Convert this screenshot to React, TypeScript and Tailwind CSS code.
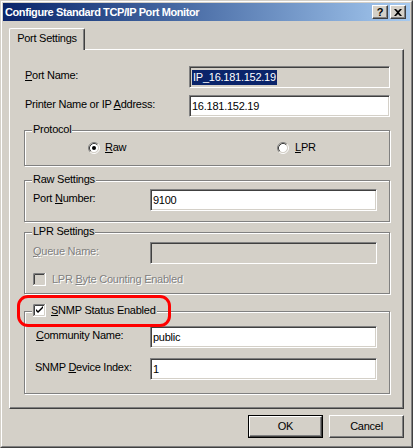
import React from "react";

const face = "bg-[#d4d0c8]";

// underline the access key letter
function U({ children }: { children: React.ReactNode }) {
  return <span className="underline underline-offset-[1px]">{children}</span>;
}

function Field({
  children,
  white = true,
  className = "",
}: {
  children?: React.ReactNode;
  white?: boolean;
  className?: string;
}) {
  return (
    <div
      className={`h-[22px] flex items-center pl-[2px] border border-t-[#808080] border-l-[#808080] border-r-white border-b-white shadow-[inset_1px_1px_0_#404040,inset_-1px_-1px_0_#d4d0c8] ${
        white ? "bg-white" : face
      } ${className}`}
    >
      {children}
    </div>
  );
}

function Group({
  label,
  className = "",
  children,
}: {
  label: React.ReactNode;
  className?: string;
  children?: React.ReactNode;
}) {
  return (
    <div
      className={`relative border border-[#808080] shadow-[inset_1px_1px_0_#fff,1px_1px_0_#fff] ${className}`}
    >
      <div className={`absolute -top-[8px] left-[7px] px-[1px] h-[13px] flex items-center leading-[13px] ${face}`}>
        {label}
      </div>
      {children}
    </div>
  );
}

function Radio({ checked }: { checked?: boolean }) {
  return (
    <svg width="12" height="12" viewBox="0 0 12 12" className="shrink-0">
      <circle cx="6" cy="6" r="4.2" fill="#fff" />
      <path d="M2.11 9.89A5.5 5.5 0 0 1 9.89 2.11" fill="none" stroke="#808080" />
      <path d="M9.89 2.11A5.5 5.5 0 0 1 2.11 9.89" fill="none" stroke="#fff" />
      <path d="M2.82 9.18A4.5 4.5 0 0 1 9.18 2.82" fill="none" stroke="#404040" />
      <path d="M9.18 2.82A4.5 4.5 0 0 1 2.82 9.18" fill="none" stroke="#d4d0c8" />
      {checked && <circle cx="6" cy="6" r="2" fill="#000" />}
    </svg>
  );
}

function Check({ checked, disabled }: { checked?: boolean; disabled?: boolean }) {
  return (
    <svg width="13" height="13" viewBox="0 0 13 13" className="shrink-0">
      <rect x="0" y="0" width="13" height="13" fill="#fff" />
      <rect x="2" y="2" width="9" height="9" fill={disabled ? "#d4d0c8" : "#fff"} />
      <path d="M0.5 12V0.5H12" fill="none" stroke="#808080" />
      <path d="M1.5 11V1.5H11" fill="none" stroke="#404040" />
      <path d="M1 11.5H11.5V1" fill="none" stroke="#d4d0c8" />
      {checked && <path d="M3 5v2l2 2 5-5V2L5 7z" fill="#000" />}
    </svg>
  );
}

function Raised({
  children,
  className = "",
}: {
  children?: React.ReactNode;
  className?: string;
}) {
  return (
    <div
      className={`flex items-center justify-center ${face} border border-t-white border-l-white border-r-[#404040] border-b-[#404040] shadow-[inset_-1px_-1px_0_#808080] ${className}`}
    >
      {children}
    </div>
  );
}

const disabledText = "text-[#808080] [text-shadow:1px_1px_0_#fff]";

export default function App() {
  return (
    <div
      className={`w-[413px] h-[448px] ${face} border border-t-[#d4d0c8] border-l-[#d4d0c8] border-r-[#404040] border-b-[#404040] text-[11px] leading-[13px] tracking-[-0.25px] text-black font-['Liberation_Sans',Arial,sans-serif]`}
    >
      <div className="h-full flex flex-col p-[1px] border border-t-white border-l-white border-r-[#808080] border-b-[#808080]">
        {/* title bar */}
        <div className="h-[18px] flex items-center bg-gradient-to-r from-[#0a246a] to-[#a6caf0] pl-[2px] pr-[4px]">
          <span className="font-bold text-white text-[11px] tracking-[-0.4px]">
            Configure Standard TCP/IP Port Monitor
          </span>
          <div className="ml-auto flex gap-[1px]">
            <Raised className="w-[16px] h-[14px]">
              <span className="font-bold text-[11px] leading-[10px] -mt-[1px] tracking-normal">?</span>
            </Raised>
            <Raised className="w-[16px] h-[14px] ml-[1px]">
              <svg width="8" height="7" viewBox="0 0 8 7">
                <path d="M0 0h2l2 2 2-2h2L5 3.5 8 7H6L4 5 2 7H0l3-3.5z" fill="#000" />
              </svg>
            </Raised>
          </div>
        </div>

        {/* body */}
        <div className="flex flex-col px-[6px] pt-[7px]">
          {/* tab strip */}
          <div className="flex">
            <div
              className={`relative z-10 -mb-[1px] w-[76px] h-[22px] ${face} border-l border-t border-r border-l-white border-t-white border-r-[#404040] rounded-tl-[2px] rounded-tr-[2px] shadow-[inset_-1px_0_0_#808080] flex items-center justify-center pb-[2px]`}
            >
              Port Settings
            </div>
          </div>

          {/* panel */}
          <div className="h-[360px] border border-l-white border-t-white border-r-[#404040] border-b-[#404040] shadow-[inset_-1px_-1px_0_#808080] pl-[14px] pr-[13px] pt-[16px] flex flex-col">
            <div className="flex items-center h-[22px]">
              <span className="ml-[1px] -mt-[3px]">
                <U>P</U>ort Name:
              </span>
              <Field white={false} className="ml-auto w-[201px]">
                <span className="bg-[#0a246a] text-white px-[1px] leading-[15px]">IP_16.181.152.19</span>
              </Field>
            </div>
            <div className="flex items-center h-[22px] mt-[7px]">
              <span className="ml-[1px] -mt-[3px]">
                Printer Name or IP <U>A</U>ddress:
              </span>
              <Field className="ml-auto w-[201px]">16.181.152.19</Field>
            </div>

            <Group label="Protocol" className="h-[36px] mt-[13px]">
              <div className="flex items-center h-[13px] mt-[10px] pl-[63px]">
                <div className="w-[189px] flex items-center gap-[5px]">
                  <Radio checked />
                  <span>
                    <U>R</U>aw
                  </span>
                </div>
                <div className="flex items-center gap-[6px]">
                  <Radio />
                  <span>
                    <U>L</U>PR
                  </span>
                </div>
              </div>
            </Group>

            <Group label="Raw Settings" className="h-[42px] mt-[14px]">
              <div className="flex items-center mt-[8px] pl-[8px]">
                <span className="w-[117px] -mt-[3px]">
                  Port <U>N</U>umber:
                </span>
                <Field className="w-[227px]">9100</Field>
              </div>
            </Group>

            <Group label="LPR Settings" className="h-[62px] mt-[10px]">
              <div className="flex items-center mt-[9px] pl-[8px]">
                <span className={`w-[117px] -mt-[3px] ${disabledText}`}>
                  <U>Q</U>ueue Name:
                </span>
                <Field white={false} className="w-[227px] h-[21px]" />
              </div>
              <div className="flex items-center mt-[9px] pl-[8px] gap-[6px]">
                <Check disabled />
                <span className={disabledText}>
                  LPR <U>B</U>yte Counting Enabled
                </span>
              </div>
            </Group>

            <Group
              label={
                <span className="flex items-center gap-[5px]">
                  <Check checked />
                  <span>
                    <U>S</U>NMP Status Enabled
                  </span>
                </span>
              }
              className="h-[83px] mt-[17px]"
            >
              <div className="flex items-center mt-[14px] pl-[11px]">
                <span className="w-[114px] -mt-[3px]">
                  <U>C</U>ommunity Name:
                </span>
                <Field className="w-[227px]">public</Field>
              </div>
              <div className="flex items-center mt-[10px] pl-[10px]">
                <span className="w-[115px] -mt-[3px]">
                  SNMP <U>D</U>evice Index:
                </span>
                <Field className="w-[227px]">1</Field>
              </div>
              {/* red highlight */}
              <div className="absolute -top-[17px] -left-[8px] w-[154px] h-[32px] rounded-[11px] border-[3px] border-[#ff0000] pointer-events-none" />
            </Group>
          </div>

          {/* buttons */}
          <div className="flex justify-end gap-[6px] mt-[6px]">
            <div className="border border-black">
              <Raised className="w-[73px] h-[21px]">OK</Raised>
            </div>
            <Raised className="w-[75px] h-[23px]">Cancel</Raised>
          </div>
        </div>
      </div>
    </div>
  );
}
